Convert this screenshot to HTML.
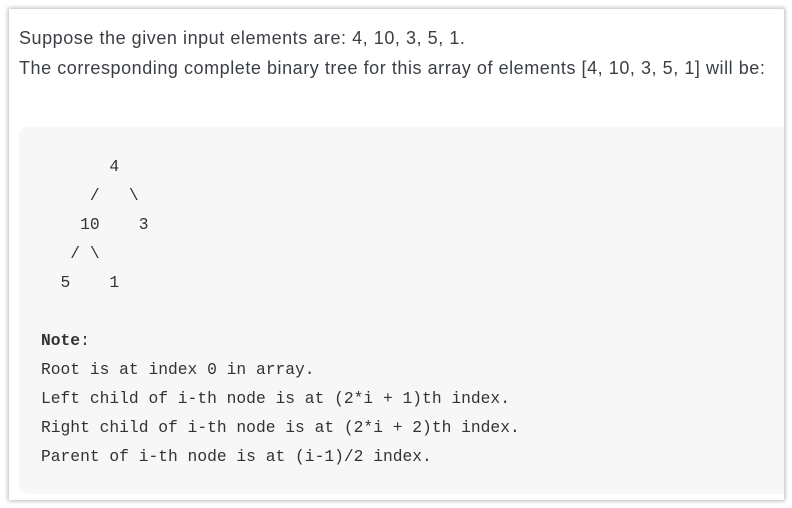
<!DOCTYPE html>
<html><head><style>
html,body{margin:0;padding:0;background:#fff;width:792px;height:508px;overflow:hidden}
.card{position:absolute;left:9px;top:9px;width:775px;height:491px;background:#fff;box-shadow:0 0 4px 1px rgba(0,0,0,.28);overflow:hidden}
.t{position:absolute;left:10px;font-family:"Liberation Sans",sans-serif;font-size:18px;color:#3a3f45;white-space:nowrap;letter-spacing:0.55px}
.code{position:absolute;left:10px;top:118px;width:800px;height:367px;background:#f7f7f7;border-radius:9px}
pre{position:absolute;left:22px;top:25px;margin:0;font-family:"Liberation Mono",monospace;font-size:16.3px;line-height:29px;color:#333}
b{font-weight:bold}
</style></head><body>
<div class="card">
<div class="t" style="top:19px">Suppose the given input elements are: 4, 10, 3, 5, 1.</div>
<div class="t" style="top:49px">The corresponding complete binary tree for this array of elements [4, 10, 3, 5, 1] will be:</div>
<div class="code"><pre>       4
     /   \
    10    3
   / \
  5    1

<b>Note</b>:
Root is at index 0 in array.
Left child of i-th node is at (2*i + 1)th index.
Right child of i-th node is at (2*i + 2)th index.
Parent of i-th node is at (i-1)/2 index.</pre></div>
</div>
</body></html>
